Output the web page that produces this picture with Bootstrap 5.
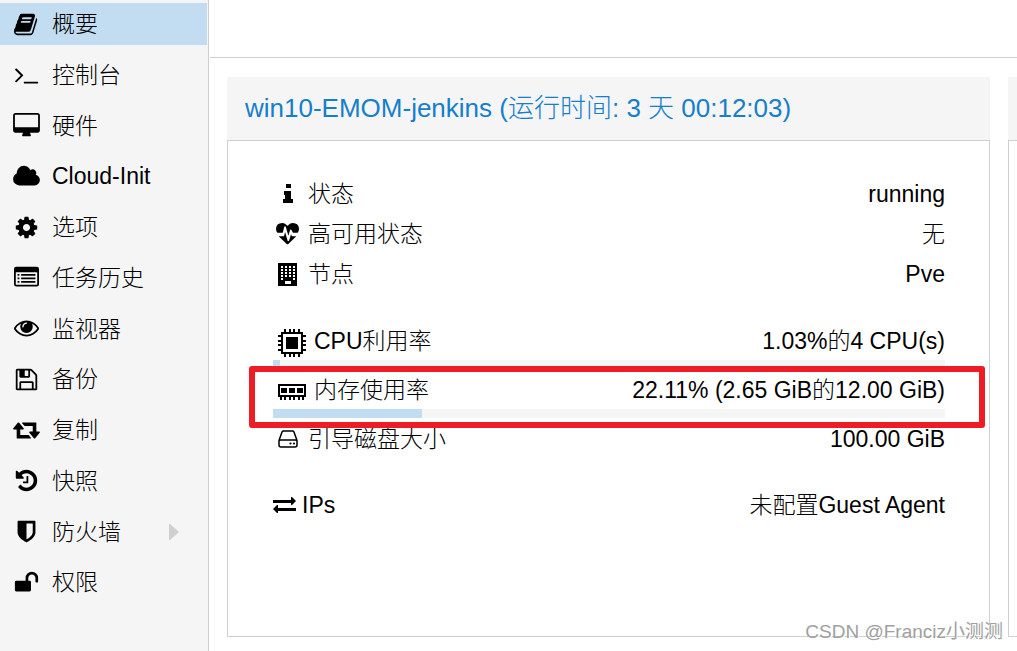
<!DOCTYPE html>
<html lang="zh-CN">
<head>
<meta charset="utf-8">
<meta name="viewport" content="width=device-width, initial-scale=1">
<title>win10-EMOM-jenkins</title>
<link href="https://cdn.jsdelivr.net/npm/bootstrap@5.3.0/dist/css/bootstrap.min.css" rel="stylesheet">
<style>
  body { font-family: "Liberation Sans", "Noto Sans CJK SC", sans-serif; font-size: 23px; font-weight: 300; line-height: 38px; color: #000; background: #fff; }
  svg { fill: currentColor; flex: none; display: block; }
  .side { flex: 0 0 209px; background: #f5f5f5; border-right: 1px solid #cfcfcf; padding: 3px 1px 39px 0; }
  .side .nav-link { color: #000; padding: 0 28px 0 13px; height: 42px; gap: 12px; font-weight: 300; }
  .side .nav-link.active { background: #c2ddf2; }
  .side .nav-link svg { width: 27px; height: 25px; }
  .side .nav-link svg.more { width: 10px; height: 16px; fill: #cfcfcf; }
  .content-area { margin-left: 1px; min-width: 0; }
  .toolbar { height: 58px; border-bottom: 1px solid #cfcfcf; }
  .panels { padding: 19px 0 14px 17px; gap: 18px; }
  .panel-title { height: 63px; background: #f5f5f5; color: #157fcc; font-size: 26px; font-weight: 300; padding: 0 18px; margin: 0; }
  .panel-box { border: 1px solid #cfcfcf; padding: 33px 44px 33px 45px; }
  .side-panel { flex: 0 0 9px; }
  .side-panel .panel-title { padding: 0; }
  .side-panel .panel-box { border-right: 0; padding: 0; }
  .facts { line-height: 40px; margin-bottom: 28px; }
  .glyph-box { width: 29px; margin-right: 6px; display: flex; justify-content: center; }
  .chip { margin: 3px 8px 0 5px; }
  .usage { margin-bottom: 2px; }
  .meter-track { height: 9px; background: #f5f5f5; }
  .meter-fill { height: 9px; background: #c2ddf2; }
  .highlight { position: absolute; inset: -5px -40px -10px -24px; border: 6px solid #ee1c24; border-radius: 3px; z-index: 1; }
  .ips { margin-top: 28px; gap: 6px; }
  .watermark { position: absolute; right: 14px; bottom: 6px; font-size: 19px; font-weight: 400; line-height: 26px; color: #a0a0a0; text-shadow: 1px 1px 0 #fff; }
</style>
</head>
<body>
<div class="d-flex min-vh-100 position-relative overflow-hidden">
  <nav class="side d-flex flex-column" aria-label="虚拟机">
    <ul class="nav flex-column flex-fill flex-nowrap">
      <li class="flex-fill"><a href="#" class="nav-link active d-flex align-items-center" aria-current="page"><svg viewBox="-64 0 1920 1792"><path d="M1639 478q40 57 18 129l-275 906q-19 64-76.500 107.500t-122.500 43.500h-923q-77 0-148.500-53.500t-99.500-131.500q-24-67-2-127 0-4 3-27t4-37q1-8-3-21.500t-3-19.500q2-11 8-21t16.500-23.500 16.500-23.500q23-38 45-91.500t30-91.500q3-10 .5-30t-.5-28q3-11 17-28t17-23q21-36 42-92t25-90q1-9-2.500-32t.5-28q4-13 22-30.500t22-22.500q19-26 42.500-84.500t27.500-96.500q1-8-3-25.500t-2-26.500q2-8 9-18t18-23 17-21q8-12 16.500-30.500t15-35 16-36 19.500-32 26.500-23.500 36-11.500 47.500 5.500l-1 3q38-9 51-9h761q74 0 114 56t18 130l-274 906q-36 119-71.500 153.500t-128.500 34.500h-869q-27 0-38 15-11 16-1 43 24 70 144 70h923q29 0 56-15.500t35-41.500l300-987q7-22 5-57 38 15 59 43zm-1064 2q-4 13 2 22.500t20 9.500h608q13 0 25.500-9.500t16.500-22.500l21-64q4-13-2-22.500t-20-9.500h-608q-13 0-25.500 9.500t-16.500 22.500zm-83 256q-4 13 2 22.500t20 9.500h608q13 0 25.500-9.500t16.500-22.500l21-64q4-13-2-22.500t-20-9.500h-608q-13 0-25.500 9.500t-16.500 22.500z"/></svg><span>概要</span></a></li>
      <li class="flex-fill"><a href="#" class="nav-link d-flex align-items-center"><svg viewBox="-64 0 1920 1792"><path d="M649 983l-466 466q-10 10-23 10t-23-10l-50-50q-10-10-10-23t10-23l393-393-393-393q-10-10-10-23t10-23l50-50q10-10 23-10t23 10l466 466q10 10 10 23t-10 23zm1079 457v64q0 14-9 23t-23 9h-960q-14 0-23-9t-9-23v-64q0-14 9-23t23-9h960q14 0 23 9t9 23z"/></svg><span>控制台</span></a></li>
      <li class="flex-fill"><a href="#" class="nav-link d-flex align-items-center"><svg viewBox="-64 0 1920 1792"><path d="M1728 992v-832q0-13-9.500-22.500t-22.500-9.500h-1600q-13 0-22.500 9.500t-9.500 22.500v832q0 13 9.500 22.500t22.500 9.500h1600q13 0 22.500-9.500t9.500-22.500zm128-832v1088q0 66-47 113t-113 47h-544q0 37 16 77.500t32 71 16 43.500q0 26-19 45t-45 19h-512q-26 0-45-19t-19-45q0-14 16-44t32-70 16-78h-544q-66 0-113-47t-47-113v-1088q0-66 47-113t113-47h1600q66 0 113 47t47 113z"/></svg><span>硬件</span></a></li>
      <li class="flex-fill"><a href="#" class="nav-link d-flex align-items-center"><svg viewBox="64 0 1920 1792"><path d="M1984 1152q0 159-112.500 271.500t-271.500 112.500h-1088q-185 0-316.500-131.500t-131.500-316.500q0-132 71-241.500t187-163.500q-2-28-2-43 0-212 150-362t362-150q158 0 286.500 88t187.500 230q70-62 166-62 106 0 181 75t75 181q0 75-41 138 129 30 213 134.500t84 239.500z"/></svg><span>Cloud-Init</span></a></li>
      <li class="flex-fill"><a href="#" class="nav-link d-flex align-items-center"><svg viewBox="-64 0 1920 1792"><path d="M1152 896q0-106-75-181t-181-75-181 75-75 181 75 181 181 75 181-75 75-181zm512-109v222q0 12-8 23t-20 13l-185 28q-19 54-39 91 35 50 107 138 10 12 10 25t-9 23q-27 37-99 108t-94 71q-12 0-26-9l-138-108q-44 23-91 38-16 136-29 186-7 28-36 28h-222q-14 0-24.500-8.500t-11.500-21.500l-28-184q-49-16-90-37l-141 107q-10 9-25 9-14 0-25-11-126-114-165-168-7-10-7-23 0-12 8-23 15-21 51-66.500t54-70.500q-27-50-41-99l-183-27q-13-2-21-12.500t-8-23.500v-222q0-12 8-23t19-13l186-28q14-46 39-92-40-57-107-138-10-12-10-24 0-10 9-23 26-36 98.500-107.500t94.500-71.500q13 0 26 10l138 107q44-23 91-38 16-136 29-186 7-28 36-28h222q14 0 24.500 8.500t11.500 21.500l28 184q49 16 90 37l142-107q9-9 24-9 13 0 25 10 129 119 165 170 7 8 7 22 0 12-8 23-15 21-51 66.500t-54 70.500q26 50 41 98l183 28q13 2 21 12.500t8 23.500z"/></svg><span>选项</span></a></li>
      <li class="flex-fill"><a href="#" class="nav-link d-flex align-items-center"><svg viewBox="-64 0 1920 1792"><path fill-rule="evenodd" d="M160 128h1472q160 0 160 160v1088q0 160-160 160H160Q0 1536 0 1376V288Q0 128 160 128zM128 544v832q0 32 32 32h1472q32 0 32-32V544q0-32-32-32H160q-32 0-32 32z"/><path d="M256 640h128v128H256zM256 896h128v128H256zM256 1152h128v128H256zM512 640h1024v128H512zM512 896h1024v128H512zM512 1152h1024v128H512z"/></svg><span>任务历史</span></a></li>
      <li class="flex-fill"><a href="#" class="nav-link d-flex align-items-center"><svg viewBox="-64 64 1920 1792"><path d="M1664 960q-152-236-381-353 61 104 61 225 0 185-131.500 316.500t-316.500 131.500-316.500-131.500-131.500-316.500q0-121 61-225-229 117-381 353 133 205 333.500 326.500t434.500 121.500 434.500-121.500 333.500-326.500zm-720-384q0-20-14-34t-34-14q-125 0-214.500 89.500t-89.500 214.500q0 20 14 34t34 14 34-14 14-34q0-86 61-147t147-61q20 0 34-14t14-34zm848 384q0 34-20 69-140 230-376.500 368.500t-499.500 138.500-499.500-139-376.500-368q-20-35-20-69t20-69q140-229 376.500-368t499.500-139 499.500 139 376.500 368q20 35 20 69z"/></svg><span>监视器</span></a></li>
      <li class="flex-fill"><a href="#" class="nav-link d-flex align-items-center"><svg viewBox="-64 0 1920 1792"><path d="M512 1536h768v-384h-768v384zm896 0h128v-896q0-14-10-38.500t-20-34.500l-281-281q-10-10-34-20t-39-10v416q0 40-28 68t-68 28h-576q-40 0-68-28t-28-68v-416h-128v1280h128v-416q0-40 28-68t68-28h832q40 0 68 28t28 68v416zm-384-928v-320q0-13-9.500-22.500t-22.500-9.500h-192q-13 0-22.500 9.500t-9.500 22.500v320q0 13 9.500 22.500t22.500 9.500h192q13 0 22.500-9.500t9.500-22.500zm640 32v928q0 40-28 68t-68 28h-1344q-40 0-68-28t-28-68v-1344q0-40 28-68t68-28h928q40 0 88 20t76 48l280 280q28 28 48 76t20 88z"/></svg><span>备份</span></a></li>
      <li class="flex-fill"><a href="#" class="nav-link d-flex align-items-center"><svg viewBox="64 64 1920 1792"><path d="M1344 1504q0 13-9.500 22.500t-22.500 9.500h-960q-8 0-13.500-2t-9-7-5.500-8-3-11.500-1-11.500v-600h-192q-26 0-45-19t-19-45q0-24 15-41l320-384q19-22 49-22t49 22l320 384q15 17 15 41 0 26-19 45t-45 19h-192v384h576q16 0 25 11l160 192q7 10 7 21zm640-416q0 24-15 41l-320 384q-20 23-49 23t-49-23l-320-384q-15-17-15-41 0-26 19-45t45-19h192v-384h-576q-16 0-25-12l-160-192q-7-9-7-20 0-13 9.500-22.500t22.500-9.500h960q8 0 13.500 2t9 7 5.500 8 3 11.500 1 11.500v600h192q26 0 45 19t19 45z"/></svg><span>复制</span></a></li>
      <li class="flex-fill"><a href="#" class="nav-link d-flex align-items-center"><svg viewBox="-64 0 1920 1792"><path d="M1664 896q0 156-61 298t-164 245-245 164-298 61q-172 0-327-72.500t-264-204.500q-7-10-6.500-22.500t8.500-20.500l137-138q10-9 25-9 16 2 23 12 73 95 179 147t225 52q104 0 198.500-40.500t163.500-109.500 109.500-163.500 40.500-198.500-40.500-198.500-109.500-163.500-163.500-109.500-198.500-40.500q-98 0-188 35.500t-160 101.500l137 138q31 30 14 69-17 40-59 40h-448q-26 0-45-19t-19-45v-448q0-42 40-59 39-17 69 14l130 129q107-101 244.500-156.500t284.500-55.500q156 0 298 61t245 164 164 245 61 298zm-640-288v448q0 14-9 23t-23 9h-320q-14 0-23-9t-9-23v-64q0-14 9-23t23-9h224v-352q0-14 9-23t23-9h64q14 0 23 9t9 23z"/></svg><span>快照</span></a></li>
      <li class="flex-fill"><a href="#" class="nav-link d-flex align-items-center"><svg viewBox="-64 0 1920 1792"><path d="M1344 960v-640h-448v1137q119-63 213-137 235-184 235-360zm192-768v768q0 86-33.500 170.500t-83 150-118 127.500-126.500 103-121 77.500-89.500 49.500-42.500 20q-12 6-26 6t-26-6q-16-7-42.500-20t-89.500-49.500-121-77.500-126.500-103-118-127.500-83-150-33.500-170.500v-768q0-26 19-45t45-19h1152q26 0 45 19t19 45z"/></svg><span>防火墙</span><svg class="more ms-auto" viewBox="0 0 10 16"><path d="M0 0h1l9 8-9 8H0z"/></svg></a></li>
      <li class="flex-fill"><a href="#" class="nav-link d-flex align-items-center"><svg viewBox="-64 0 1920 1792"><path d="M1728 576v256q0 26-19 45t-45 19h-64q-26 0-45-19t-19-45v-256q0-106-75-181t-181-75-181 75-75 181v192h96q40 0 68 28t28 68v576q0 40-28 68t-68 28h-960q-40 0-68-28t-28-68v-576q0-40 28-68t68-28h672v-192q0-185 131.500-316.500t316.500-131.500 316.500 131.500 131.500 316.500z"/></svg><span>权限</span></a></li>
    </ul>
  </nav>

  <main class="content-area flex-fill d-flex flex-column">
    <div class="toolbar"></div>
    <div class="panels d-flex flex-fill">
      <section class="flex-fill d-flex flex-column">
        <h1 class="panel-title d-flex align-items-center text-nowrap">win10-EMOM-jenkins (运行时间: 3 天 00:12:03)</h1>
        <div class="panel-box flex-fill">
          <div class="facts">
            <div class="d-flex align-items-center">
              <span class="glyph-box"><svg width="10" height="20" viewBox="0 0 10 20"><path d="M3 0h5v4H3zM1 7h7v8h2v4H0v-4h2v-4H1z"/></svg></span>
              <span>状态</span><span class="ms-auto">running</span>
            </div>
            <div class="d-flex align-items-center">
              <span class="glyph-box"><svg width="23" height="23" viewBox="0 0 1792 1792"><path d="M1280 1024h305q-5 6-10 10.500t-9 7.500l-3 4-623 600q-18 18-44 18t-44-18l-624-602q-5-2-21-20h369q22 0 39.500-13.500t22.500-34.500l70-281 190 667q6 20 23 33t39 13q21 0 38-13t23-33l146-485 56 112q18 35 57 35zm512-556q0 145-103 300h-369l-111-221q-8-17-25.500-27t-36.500-8q-45 5-56 46l-129 430-196-686q-6-20-23.500-33t-39.500-13-39 13.500-22 34.500l-116 464h-423q-103-155-103-300 0-220 127-344t351-124q62 0 126.500 21.500t120 58 95.500 68.500 76 68q36-36 76-68t95.500-68.500 120-58 126.500-21.500q224 0 351 124t127 344z"/></svg></span>
              <span>高可用状态</span><span class="ms-auto">无</span>
            </div>
            <div class="d-flex align-items-center">
              <span class="glyph-box"><svg width="19" height="23" viewBox="0 0 19 23"><path d="M0 0h19v23H0z"/><path fill="#fff" d="M3 3h2v2H3zm4 0h2v2H7zm4 0h2v2h-2zm4 0h2v2h-2zM3 6h2v2H3zm4 0h2v2H7zm4 0h2v2h-2zm4 0h2v2h-2zM3 9h2v2H3zm4 0h2v2H7zm4 0h2v2h-2zm4 0h2v2h-2zM3 12h2v2H3zm4 0h2v2H7zm4 0h2v2h-2zm4 0h2v2h-2zM3 15h2v2H3zm12 0h2v2h-2zM7 18h6v3H7z"/></svg></span>
              <span>节点</span><span class="ms-auto">Pve</span>
            </div>
          </div>

          <div class="usage">
            <div class="d-flex align-items-center">
              <svg class="chip" width="28" height="28" viewBox="0 0 28 28"><path fill-rule="evenodd" d="M3 3h22v22H3zM5 5v18h18V5z"/><path d="M8 8h12v12H8zM6 0h2v4H6zm5 0h2v4h-2zm4 0h2v4h-2zm5 0h2v4h-2zM6 24h2v4H6zm5 0h2v4h-2zm4 0h2v4h-2zm5 0h2v4h-2zM0 6h4v2H0zm0 5h4v2H0zm0 4h4v2H0zm0 5h4v2H0zM24 6h4v2h-4zm0 5h4v2h-4zm0 4h4v2h-4zm0 5h4v2h-4z"/></svg>
              <span>CPU利用率</span><span class="ms-auto">1.03%的4 CPU(s)</span>
            </div>
            <div class="meter-track"><div class="meter-fill" style="width:1.03%"></div></div>
          </div>

          <div class="usage position-relative">
            <div class="highlight"></div>
            <div class="d-flex align-items-center">
              <svg class="chip" width="28" height="17" viewBox="0 0 28 17"><path fill-rule="evenodd" d="M0 1h28v13H0zM2 3v9h24V3z"/><path d="M3 5h6v5H3zm8 0h6v5h-6zm8 0h6v5h-6zM2 13h2v4H2zm4 0h2v4H6zm5 0h2v4h-2zm4 0h2v4h-2zm5 0h2v4h-2zm4 0h2v4h-2z"/></svg>
              <span>内存使用率</span><span class="ms-auto">22.11% (2.65 GiB的12.00 GiB)</span>
            </div>
            <div class="meter-track"><div class="meter-fill" style="width:22.11%"></div></div>
          </div>

          <div class="d-flex align-items-center">
            <span class="glyph-box"><svg width="20" height="18" viewBox="0 0 20 18"><path fill="none" stroke="currentColor" stroke-width="1.5" stroke-linejoin="round" d="M1 10.500L4 2q.4-1 1.500-1h9q1.100 0 1.500 1l3 8.500V15q0 2-2 2H3q-2 0-2-2zq.5-.5 2-.5h14q1.500 0 2 .5"/><circle cx="12.500" cy="13.500" r="1.100"/><circle cx="16" cy="13.500" r="1.100"/></svg></span>
            <span>引导磁盘大小</span><span class="ms-auto">100.00 GiB</span>
          </div>

          <div class="ips d-flex align-items-center">
            <svg width="23" height="18" viewBox="0 0 23 18"><path d="M0 4h18V1h1l4 4-4 4h-1V7H0zM23 12H5V9H4l-4 4 4 4h1v-2h18z"/></svg>
            <span>IPs</span><span class="ms-auto">未配置Guest Agent</span>
          </div>
        </div>
      </section>
      <section class="side-panel d-flex flex-column">
        <div class="panel-title"></div>
        <div class="panel-box flex-fill"></div>
      </section>
    </div>
  </main>
  <div class="watermark">CSDN @Franciz小测测</div>
</div>
<script src="https://cdn.jsdelivr.net/npm/bootstrap@5.3.0/dist/js/bootstrap.bundle.min.js"></script>
</body>
</html>
